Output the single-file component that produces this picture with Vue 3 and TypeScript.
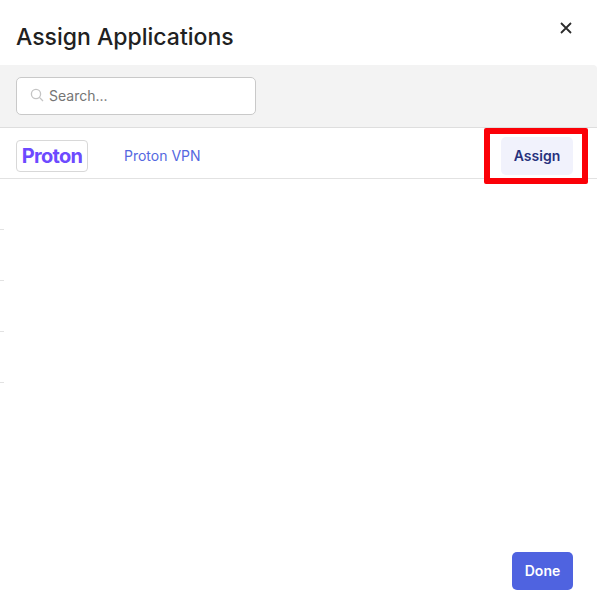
<template>
  <div class="modal">
    <header class="modal-header">
      <h2 class="title">Assign Applications</h2>
      <button class="close" type="button" aria-label="Close">
        <svg width="12" height="12" viewBox="0 0 12 12" fill="none" stroke="#2b2b2b" stroke-width="1.8">
          <path d="M1 1l10 10M11 1L1 11" />
        </svg>
      </button>
    </header>

    <div class="search-band">
      <div class="search-box">
        <svg class="search-icon" width="14" height="14" viewBox="0 0 14 14" fill="none" stroke="#c4c4c4" stroke-width="1.3">
          <circle cx="6" cy="6" r="4.6" />
          <path d="M9.4 9.4l3.6 3.6" />
        </svg>
        <input class="search-input" type="text" placeholder="Search..." aria-label="Search" />
      </div>
    </div>

    <div class="app-row">
      <div class="logo"><span class="logo-text">Proton</span></div>
      <a class="app-name">Proton VPN</a>
      <div class="assign-wrap">
        <button class="assign" type="button">Assign</button>
      </div>
    </div>

    <div class="ghost-rows">
      <div v-for="n in 4" :key="n" class="ghost-row"></div>
    </div>

    <footer class="modal-footer">
      <button class="done" type="button">Done</button>
    </footer>
  </div>
</template>

<script setup lang="ts">
defineOptions({ name: "AssignApplications" });
</script>

<style>
html,
body {
  margin: 0;
  background: #fff;
}
</style>

<style scoped>
.modal {
  position: relative;
  display: flex;
  flex-direction: column;
  width: 597px;
  height: 600px;
  overflow: hidden;
  background: #fff;
  font-family: Inter, "Liberation Sans", sans-serif;
  box-sizing: border-box;
}

.modal-header {
  display: flex;
  justify-content: space-between;
  height: 65px;
  padding: 0 25px 0 16px;
  box-sizing: border-box;
}

.title {
  margin: 23px 0 0;
  font-size: 23px;
  line-height: 28px;
  font-weight: 500;
  color: #212121;
}

.close {
  align-self: flex-start;
  display: flex;
  margin-top: 22px;
  padding: 0;
  border: none;
  background: none;
}

.search-band {
  height: 63px;
  padding: 12px 16px 0;
  box-sizing: border-box;
  background: #f3f3f3;
  border-bottom: 1px solid #dedede;
  border-top-right-radius: 4px;
}

.search-box {
  display: flex;
  align-items: center;
  gap: 5px;
  width: 240px;
  height: 38px;
  padding: 0 0 2px 13px;
  box-sizing: border-box;
  background: #fff;
  border: 1px solid #c9c9c9;
  border-radius: 5px;
}

.search-input {
  flex: 1;
  min-width: 0;
  padding: 0;
  border: none;
  outline: none;
  background: transparent;
  font-family: inherit;
  font-size: 14px;
  color: #333;
}

.search-input::placeholder {
  color: #757575;
  opacity: 1;
}

.app-row {
  display: flex;
  align-items: center;
  height: 51px;
  padding: 6px 24px 0 16px;
  box-sizing: border-box;
  border-bottom: 1px solid #e2e2e2;
}

.logo {
  display: flex;
  align-items: center;
  justify-content: center;
  width: 72px;
  height: 32px;
  box-sizing: border-box;
  background: #fff;
  border: 1px solid #d8d8d8;
  border-radius: 4px;
}

.logo-text {
  font-size: 20px;
  line-height: 24px;
  font-weight: 700;
  letter-spacing: -0.7px;
  color: #6d4aff;
}

.app-name {
  margin: 0 0 2px 36px;
  font-size: 14px;
  color: #5468e0;
}

.assign-wrap {
  position: relative;
  margin-left: auto;
  display: flex;
}

/* red highlight drawn over the row */
.assign-wrap::after {
  content: "";
  position: absolute;
  top: -9px;
  bottom: -9px;
  left: -17px;
  right: -15px;
  border: 6px solid #fb0007;
  border-radius: 2px;
  pointer-events: none;
}

.assign {
  width: 72px;
  height: 38px;
  padding: 0 0 2px;
  border: none;
  border-radius: 5px;
  background: #f1f2fc;
  font-family: inherit;
  font-size: 14px;
  font-weight: 600;
  color: #27317d;
}

.ghost-row {
  position: relative;
  height: 51px;
}

.ghost-row::after {
  content: "";
  position: absolute;
  left: 0;
  bottom: 0;
  width: 4px;
  height: 1px;
  background: #e2e2e2;
}

.modal-footer {
  display: flex;
  justify-content: flex-end;
  margin-top: auto;
  padding: 0 24px 10px;
}

.done {
  width: 61px;
  height: 38px;
  padding: 0 0 2px;
  border: none;
  border-radius: 5px;
  background: #4f63e0;
  font-family: inherit;
  font-size: 14px;
  font-weight: 600;
  color: #fff;
}
</style>
